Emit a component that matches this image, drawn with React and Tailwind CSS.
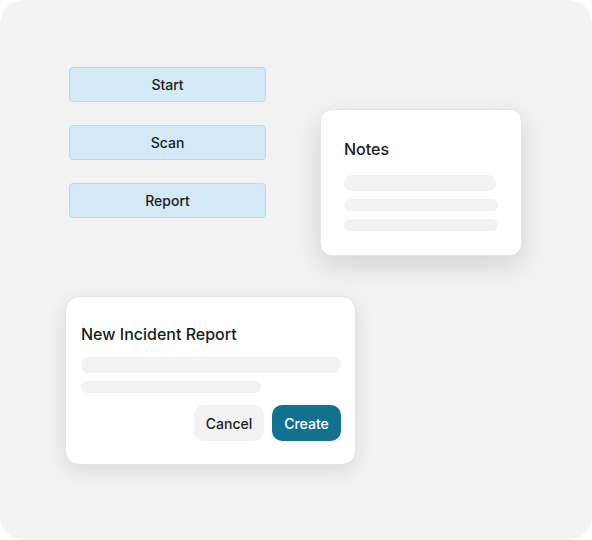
import React from "react";

const FONT = { fontFamily: "Inter, 'Noto Sans', sans-serif" };

const NavButton = ({ label }) => (
  <button className="w-[197px] h-[35px] rounded-[4px] border border-[#bcd6e6] bg-[#d3e9f6] text-[14px] font-medium text-[#1c1c1c] flex items-center justify-center">
    {label}
  </button>
);

// Grey placeholder line inside the cards
const Bar = ({ className }) => (
  <div className={`rounded-full bg-[#f2f2f2] ${className}`} />
);

export default function App() {
  return (
    <div className="w-[592px] h-[540px] bg-white" style={FONT}>
      <div className="relative w-full h-full rounded-[24px] bg-[#f2f2f2] overflow-hidden">
        {/* --- Left menu buttons --- */}
        <div className="absolute left-[69px] top-[67px] flex flex-col gap-[23px]">
          <NavButton label="Start" />
          <NavButton label="Scan" />
          <NavButton label="Report" />
        </div>

        {/* --- Notes card --- */}
        <div className="absolute left-[320px] top-[109px] w-[202px] h-[147px] rounded-[12px] border border-[#e4e4e4] bg-white shadow-[0_10px_28px_rgba(0,0,0,0.13)] pl-[23px] pr-[23px] pt-[27px]">
          <h3 className="text-[16px] leading-[24px] font-medium text-[#1c1c1c]">
            Notes
          </h3>
          <div className="mt-[14px] flex flex-col gap-[8px]">
            <Bar className="w-[152px] h-[16px]" />
            <Bar className="w-[154px] h-[12px]" />
            <Bar className="w-[154px] h-[12px]" />
          </div>
        </div>

        {/* --- New incident dialog --- */}
        <div className="absolute left-[65px] top-[296px] w-[291px] h-[169px] rounded-[14px] border border-[#e4e4e4] bg-white shadow-[0_6px_20px_rgba(0,0,0,0.10)] pl-[15px] pr-[14px] pt-[25px]">
          <h3 className="text-[16px] leading-[24px] font-medium text-[#1c1c1c]">
            New Incident Report
          </h3>
          <div className="mt-[11px] flex flex-col gap-[8px]">
            <Bar className="w-[260px] h-[16px]" />
            <Bar className="w-[180px] h-[12px]" />
          </div>
          <div className="mt-[12px] flex justify-end gap-[8px]">
            <button className="w-[70px] h-[36px] rounded-[10px] bg-[#f2f2f2] text-[14px] font-medium text-[#1c1c1c]">
              Cancel
            </button>
            <button className="w-[69px] h-[36px] rounded-[10px] bg-[#12718f] text-[14px] font-medium text-white">
              Create
            </button>
          </div>
        </div>
      </div>
    </div>
  );
}
